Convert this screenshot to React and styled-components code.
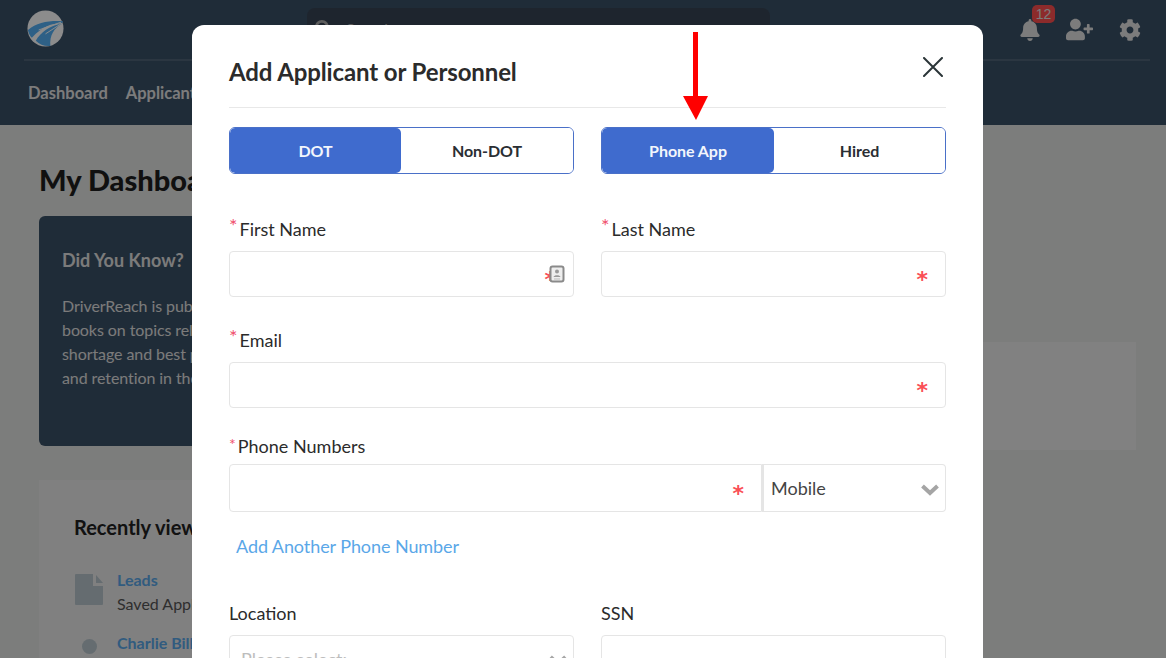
import React from 'react'
import styled, { createGlobalStyle } from 'styled-components'
import { FaBell, FaUserPlus, FaCog, FaSearch } from 'react-icons/fa'

const GlobalStyle = createGlobalStyle`
  html, body {
    margin: 0;
    height: 100%;
    overflow: hidden;
    background: #e2e4e2;
    font-family: Lato, "Open Sans", sans-serif;
    color: #222;
  }
  * { box-sizing: border-box; }
`

const Header = styled.header`
  height: 125px;
  background: #3a5066;
  color: #e2e2e2;
`
const TopBar = styled.div`
  height: 61px;
  margin: 0 16px 0 24px;
  border-bottom: 2px solid #4f6377;
  display: flex;
  align-items: flex-start;
  padding: 10px 0 0 3px;
`
const SearchBox = styled.div`
  width: 463px;
  height: 40px;
  margin: -2px 0 0 243px;
  border-radius: 8px;
  background: #384454;
  display: flex;
  align-items: center;
  gap: 14px;
  padding: 0 8px;
  font-size: 16px;
  color: #aaa;
`
const IconTray = styled.div`
  margin-left: auto;
  margin-right: 9px;
  display: flex;
  align-items: center;
  gap: 26px;
  font-size: 24px;
  padding-top: 6px;
`
const BellWrap = styled.span`
  position: relative;
  display: flex;
  margin-right: -1px;
  font-size: 22px;
`
const Badge = styled.span`
  position: absolute;
  top: -14px;
  left: 13px;
  width: 23px;
  height: 18px;
  border-radius: 5px;
  background: #ff4f4f;
  font: 14px/18px "Liberation Sans", sans-serif;
  text-align: center;
`
const NavRow = styled.nav`
  display: flex;
  gap: 18px;
  padding: 22px 0 0 28px;
  font-size: 16.5px;
  font-weight: 700;
`
const Content = styled.main`
  display: grid;
  grid-template-columns: 400px 1fr;
  gap: 40px;
  padding: 0 30px 0 39px;
`
const LeftColumn = styled.div`
  padding-top: 36px;
`
const PageTitle = styled.h1`
  margin: 0 0 17px;
  font-size: 29px;
  line-height: 38px;
  font-weight: 900;
  color: #1e1e1e;
`
const TipCard = styled.section`
  height: 230px;
  padding: 32px 23px;
  border-radius: 6px;
  background: #3a5066;
  color: #e0e0e0;
`
const TipTitle = styled.h3`
  margin: 0 0 22px;
  font-size: 18px;
  line-height: 24px;
`
const TipText = styled.p`
  margin: 0;
  font-size: 16px;
  line-height: 24px;
  letter-spacing: -0.08px;
`
const RecentCard = styled.section`
  margin-top: 34px;
  padding: 33px 35px;
  background: #e9e9e9;
  height: 300px;
`
const RecentTitle = styled.h2`
  margin: 0 0 27px;
  font-size: 20px;
  line-height: 28px;
`
const RecentRow = styled.div`
  display: flex;
  gap: 14px;
  margin-bottom: 15px;
`
const RecentIcon = styled.div`
  width: 28px;
  margin-left: 1px;
  flex: none;
  display: flex;
  justify-content: center;
  padding-top: ${p => p.$top || 0}px;
`
const Dot = styled.span`
  width: 15px;
  height: 15px;
  border-radius: 50%;
  background: #b8c5cc;
`
const RecentLink = styled.div`
  font-size: 16px;
  line-height: 24px;
  font-weight: 700;
  color: #5aa7e8;
`
const RecentSub = styled.div`
  font-size: 16px;
  line-height: 24px;
  color: #555;
`
const RightPanel = styled.div`
  margin-top: 217px;
  height: 108px;
  background: #ececec;
`
const Overlay = styled.div`
  position: fixed;
  inset: 0;
  background: rgba(0, 0, 0, 0.45);
`
const Modal = styled.div`
  position: fixed;
  top: 25px;
  left: 192px;
  width: 791px;
  height: 760px;
  padding: 0 37px;
  border-radius: 12px;
  background: #fff;
`
const ModalHead = styled.div`
  height: 83px;
  border-bottom: 1px solid #e8e8e8;
  display: flex;
  justify-content: space-between;
  padding-top: 29px;
`
const ModalTitle = styled.h2`
  margin: 0;
  font-size: 24px;
  line-height: 36px;
  font-weight: 700;
  letter-spacing: -0.12px;
  color: #2b2b2b;
`
const CloseIcon = styled.svg`
  width: 20px;
  height: 20px;
  margin: 3px 3px 0 0;
  stroke: #2b3538;
  stroke-width: 2;
  stroke-linecap: round;
`
const TwoCol = styled.div`
  display: grid;
  grid-template-columns: 345px 345px;
  gap: 27px;
`
const ToggleRow = styled(TwoCol)`
  margin-top: 19px;
`
const Toggle = styled.div`
  display: grid;
  grid-template-columns: ${p => p.$split}px 1fr;
  height: 47px;
  border: 1px solid #4a70c8;
  border-radius: 6px;
  overflow: hidden;
`
const ToggleOption = styled.div`
  display: flex;
  align-items: center;
  justify-content: center;
  font-size: 16px;
  font-weight: 700;
  letter-spacing: -0.05px;
  border-radius: ${p => (p.$active ? '5px' : '0')};
  background: ${p => (p.$active ? '#3f6bce' : '#fff')};
  color: ${p => (p.$active ? '#f2f6fc' : '#2a2e33')};
`
const Field = styled.div`
  margin-top: ${p => p.$top || 0}px;
`
const Label = styled.label`
  display: block;
  height: 24px;
  margin-bottom: ${p => p.$gap ?? 10}px;
  font-size: 18px;
  line-height: 24px;
  color: #2b2b2b;
`
const Star = styled.span`
  display: inline-block;
  font-size: ${p => p.$size || 20}px;
  line-height: 0;
  margin-right: 2px;
  vertical-align: 3px;
  color: #f0506e;
`
const InputWrap = styled.div`
  position: relative;
  flex: 1;
`
const TextInput = styled.input`
  display: block;
  width: 100%;
  height: ${p => p.$height || 46}px;
  border: 1px solid #e5e5e5;
  border-radius: ${p => p.$radius || '4px'};
  background: #fff;
  outline: none;
`
const Required = styled.span`
  position: absolute;
  right: ${p => p.$right || 18}px;
  top: 50%;
  transform: translateY(-50%);
  margin-top: 6px;
  font: 700 22px/24px "DejaVu Sans", sans-serif;
  color: #fa4f55;
`
const ContactIcon = styled.svg`
  position: absolute;
  right: 9px;
  top: 14px;
  width: 16px;
  height: 18px;
`
const PhoneRow = styled.div`
  display: flex;
`
const PhoneType = styled.div`
  width: 184px;
  height: 48px;
  display: flex;
  align-items: center;
  justify-content: space-between;
  padding: 0 6px 0 7px;
  border: 1px solid #e5e5e5;
  border-left: 2px solid #e5e5e5;
  border-radius: 0 4px 4px 0;
  font-size: 18px;
  color: #444;
`
const ChevronIcon = styled.svg`
  flex: none;
  width: 18px;
  height: 12px;
  margin-top: 4px;
  fill: none;
  stroke: #a5a5a5;
  stroke-width: 4;
`
const AddLink = styled.a`
  display: block;
  margin: 22px 0 0 7px;
  font-size: 18px;
  line-height: 24px;
  letter-spacing: -0.08px;
  color: #5aa7e8;
`
const SelectBox = styled.div`
  height: 46px;
  padding: 11px 6px 8px 11px;
  border: 1px solid #e5e5e5;
  border-radius: 4px;
  display: flex;
  justify-content: space-between;
  font-size: 18px;
  line-height: 24px;
  color: #bdbdbd;
`
const SelectChevron = styled(ChevronIcon)`
  margin-top: 8px;
`
const Arrow = styled.svg`
  position: fixed;
  left: 683px;
  top: 32px;
  width: 26px;
  height: 90px;
`
const Logo = () => (
  <svg width="37" height="37" viewBox="0 0 38 37">
    <circle cx="19" cy="18.5" r="18.5" fill="#ffffff" />
    <path d="M1 20C10 12 24 10 37 11L36 13C25 13 16 16 5 28C3 26 1.500 23 1 20Z" fill="#54b0f5" />
    <path d="M9 31C14 22 24 15 36 13.500C28 18 23 25 24 36.500C18 37 13 35 9 31Z" fill="#54b0f5" />
    <path d="M12 20L35 12M19 24L36 13" stroke="#ffffff" strokeWidth="1" />
  </svg>
)

const Chevron = ({ as: Icon = ChevronIcon }) => (
  <Icon viewBox="0 0 18 12"><path d="M1.500 2L9 9L16.500 2" /></Icon>
)

const App = () => (
  <>
    <GlobalStyle />
    <Header>
      <TopBar>
        <Logo />
        <SearchBox><FaSearch size={17} />Search</SearchBox>
        <IconTray>
          <BellWrap><FaBell /><Badge>12</Badge></BellWrap>
          <FaUserPlus size={27} />
          <FaCog size={22} />
        </IconTray>
      </TopBar>
      <NavRow><span>Dashboard</span><span>Applicants</span></NavRow>
    </Header>
    <Content>
      <LeftColumn>
        <PageTitle>My Dashboard</PageTitle>
        <TipCard>
          <TipTitle>Did You Know?</TipTitle>
          <TipText>DriverReach is publishing<br />books on topics related to the<br />shortage and best practices<br />and retention in the industry</TipText>
        </TipCard>
        <RecentCard>
          <RecentTitle>Recently viewed</RecentTitle>
          <RecentRow>
            <RecentIcon $top={6}>
              <svg width="28" height="31" viewBox="0 0 28 31">
                <path d="M1 0H18V12H28V30a1 1 0 0 1-1 1H1a1 1 0 0 1-1-1V1a1 1 0 0 1 1-1Z" fill="#b8c5cc" />
                <path d="M21 1L28 9H21Z" fill="#b8c5cc" />
              </svg>
            </RecentIcon>
            <div><RecentLink>Leads</RecentLink><RecentSub>Saved Applicants</RecentSub></div>
          </RecentRow>
          <RecentRow>
            <RecentIcon $top={8}><Dot /></RecentIcon>
            <div><RecentLink>Charlie Billings</RecentLink></div>
          </RecentRow>
        </RecentCard>
      </LeftColumn>
      <RightPanel />
    </Content>
    <Overlay />
    <Modal>
      <ModalHead>
        <ModalTitle>Add Applicant or Personnel</ModalTitle>
        <CloseIcon viewBox="0 0 20 20"><path d="M1 1L19 19M19 1L1 19" /></CloseIcon>
      </ModalHead>
      <ToggleRow>
        <Toggle $split={171}>
          <ToggleOption $active>DOT</ToggleOption>
          <ToggleOption>Non-DOT</ToggleOption>
        </Toggle>
        <Toggle $split={172}>
          <ToggleOption $active>Phone App</ToggleOption>
          <ToggleOption>Hired</ToggleOption>
        </Toggle>
      </ToggleRow>
      <TwoCol>
        <Field $top={43}>
          <Label><Star>*</Star>First Name</Label>
          <InputWrap>
            <TextInput />
            <Required $right={18}>*</Required>
            <ContactIcon viewBox="0 0 16 18">
              <rect x="1.500" y="1.500" width="13" height="15" rx="2" fill="#eee" stroke="#8a8a8a" strokeWidth="2" />
              <circle cx="8" cy="6.500" r="2" fill="#9a9a9a" />
              <path d="M4.500 12C5 9.500 11 9.500 11.500 12Z" fill="#9a9a9a" />
              <path d="M5 14H11" stroke="#bbb" />
            </ContactIcon>
          </InputWrap>
        </Field>
        <Field $top={43}>
          <Label><Star>*</Star>Last Name</Label>
          <InputWrap><TextInput /><Required>*</Required></InputWrap>
        </Field>
      </TwoCol>
      <Field $top={31}>
        <Label><Star>*</Star>Email</Label>
        <InputWrap><TextInput /><Required>*</Required></InputWrap>
      </Field>
      <Field $top={26}>
        <Label $gap={6}><Star $size={16}>*</Star>Phone Numbers</Label>
        <PhoneRow>
          <InputWrap>
            <TextInput $height={48} $radius="4px 0 0 4px" />
            <Required>*</Required>
          </InputWrap>
          <PhoneType>Mobile<Chevron /></PhoneType>
        </PhoneRow>
      </Field>
      <AddLink>Add Another Phone Number</AddLink>
      <TwoCol>
        <Field $top={43}>
          <Label>Location</Label>
          <SelectBox>Please select:<Chevron as={SelectChevron} /></SelectBox>
        </Field>
        <Field $top={43}>
          <Label>SSN</Label>
          <TextInput />
        </Field>
      </TwoCol>
    </Modal>
    <Arrow viewBox="0 0 26 90">
      <path d="M10 0H15V64H25L13 88L0 64H10Z" fill="#ff0000" />
    </Arrow>
  </>
)

export default App
